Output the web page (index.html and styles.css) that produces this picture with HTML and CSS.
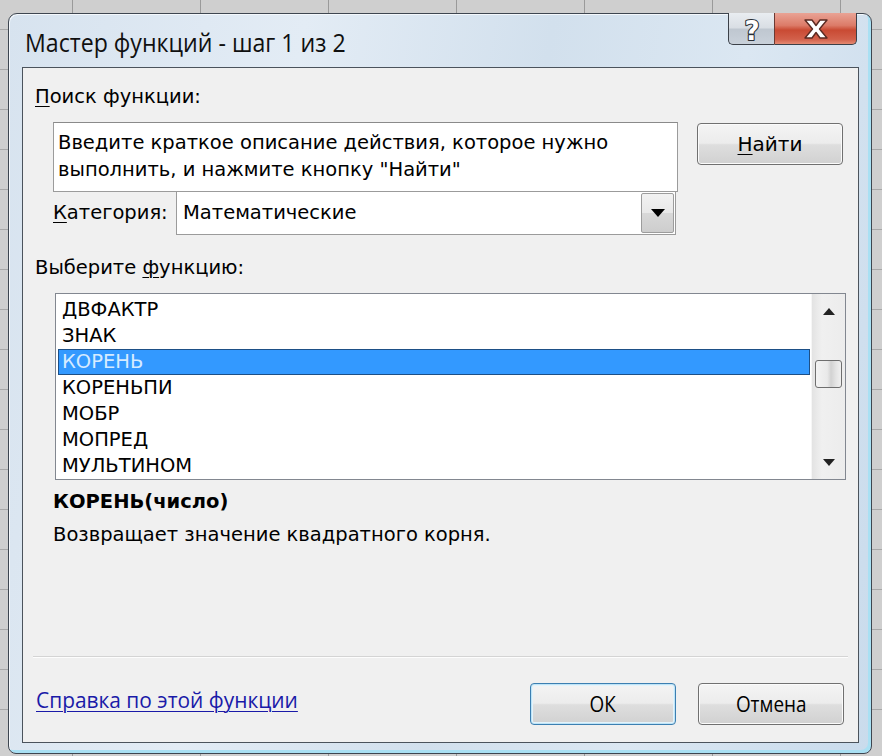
FILE: index.html
```html
<!DOCTYPE html>
<html lang="ru">
<head>
<meta charset="utf-8">
<title>Мастер функций</title>
<link rel="stylesheet" href="styles.css">
</head>
<body>
<div class="desk">
  <div class="window">
    <div class="titlebar">
      <div class="title"><span class="title-text">Мастер функций - шаг 1 из 2</span></div>
      <div class="caption-btns">
        <div class="cap-btn help">
          <svg class="q-svg" width="26" height="31" viewBox="0 0 26 31">
            <text x="13" y="27" text-anchor="middle" class="q">?</text>
          </svg>
        </div>
        <div class="cap-btn close">
          <svg width="34" height="22" viewBox="0 0 34 22">
            <path d="M6 2 H13 L17 7.5 L21 2 H28 L20.5 11 L28 20 H21 L17 14.5 L13 20 H6 L13.5 11 Z" fill="#fff" stroke="#5a2a22" stroke-width="1.4" stroke-linejoin="round"/>
          </svg>
        </div>
      </div>
    </div>
    <div class="panel">
      <div class="lbl lbl-search"><u>П</u>оиск функции:</div>
      <div class="search-row">
        <div class="search-box">Введите краткое описание действия, которое нужно выполнить, и нажмите кнопку &quot;Найти&quot;</div>
        <div class="btn btn-find"><u>Н</u>айти</div>
      </div>
      <div class="cat-row">
        <div class="lbl lbl-cat"><u>К</u>атегория:</div>
        <div class="select">
          <div class="select-val">Математические</div>
          <div class="select-btn"><span class="tri-down"></span></div>
        </div>
      </div>
      <div class="lbl lbl-func">Выберите <u>ф</u>ункцию:</div>
      <div class="listbox">
        <div class="items">
          <div class="item">ДВФАКТР</div>
          <div class="item">ЗНАК</div>
          <div class="item sel">КОРЕНЬ</div>
          <div class="item">КОРЕНЬПИ</div>
          <div class="item">МОБР</div>
          <div class="item">МОПРЕД</div>
          <div class="item">МУЛЬТИНОМ</div>
        </div>
        <div class="vscroll">
          <div class="arr arr-up"></div>
          <div class="track">
            <div class="thumb"></div>
          </div>
          <div class="arr arr-down"></div>
        </div>
      </div>
      <div class="syntax">КОРЕНЬ(число)</div>
      <div class="desc">Возвращает значение квадратного корня.</div>
      <div class="spacer"></div>
      <div class="sep"></div>
      <div class="bottom-row">
        <a class="help-link" href="#">Справка по этой функции</a>
        <div class="btns">
          <div class="btn btn-ok"><span class="cond">ОК</span></div>
          <div class="btn btn-cancel"><span class="cond">Отмена</span></div>
        </div>
      </div>
    </div>
  </div>
</div>
</body>
</html>
```

FILE: styles.css
```css
html, body {
  margin: 0;
  padding: 0;
}
body {
  width: 882px;
  height: 756px;
  overflow: hidden;
  background-color: #cfcfcf;
  background-image:
    repeating-linear-gradient(90deg, transparent 0, transparent 72px, #9a9a9a 72px, #9a9a9a 73px, transparent 73px, transparent 128px),
    repeating-linear-gradient(180deg, transparent 0, transparent 39px, #a8a8a8 39px, #a8a8a8 40px);
  background-position: 0 0, 0 -10px;
  font-family: "DejaVu Sans", Verdana, sans-serif;
  color: #000;
}
.desk {
  padding: 13px 0 0 8px;
}
.window {
  box-sizing: border-box;
  width: 864px;
  height: 741px;
  border: 1px solid #3e4650;
  border-radius: 9px 9px 8px 8px;
  background: linear-gradient(100deg, #d7e3ef 0%, #e3ecf5 30%, #d2e0ed 55%, #dbe7f2 75%, #c9dbec 100%);
  box-shadow: inset -3px -3px 0 #a9e0f3, inset 1px 1px 0 #f4f8fc;
  display: flex;
  flex-direction: column;
  padding: 0 12px 10px 13px;
}
.titlebar {
  height: 53px;
  display: flex;
  align-items: flex-start;
}
.title {
  padding-left: 3px;
  padding-top: 13px;
  flex: 1;
}
.title-text {
  display: inline-block;
  font-family: "Open Sans", "Noto Sans", sans-serif;
  font-size: 26px;
  line-height: 30px;
  color: #101010;
  transform: scaleX(0.89);
  transform-origin: left center;
  white-space: nowrap;
}
.caption-btns {
  display: flex;
  margin-right: 2px;
  margin-top: -1px;
}
.cap-btn {
  height: 31px;
  border: 1px solid #3b4048;
  border-top: none;
  display: flex;
  align-items: center;
  justify-content: center;
}
.help {
  width: 45px;
  border-radius: 0 0 0 5px;
  border-right: none;
  background: linear-gradient(180deg, #e9edf1 0%, #d9dee4 48%, #bfc7d0 52%, #c9d1da 100%);
}
.q-svg {
  display: block;
  overflow: visible;
}
.q {
  font-family: "DejaVu Sans", sans-serif;
  font-weight: bold;
  font-size: 26px;
  fill: #fff;
  stroke: #2a2f36;
  stroke-width: 2.2px;
  stroke-linejoin: round;
  paint-order: stroke fill;
}
.close {
  width: 81px;
  border-radius: 0 0 5px 0;
  border-left: 1px solid #6b3a33;
  background: linear-gradient(180deg, #e9a395 0%, #dc7b68 40%, #c94a33 55%, #d2604b 85%, #e48a72 100%);
}
.panel {
  flex: 1;
  border: 1px solid #4b535c;
  background: #f0f0f0;
  display: flex;
  flex-direction: column;
  font-size: 19.5px;
}
.lbl {
  line-height: 28px;
  white-space: nowrap;
}
.lbl u {
  text-decoration-thickness: 1px;
  text-underline-offset: 3px;
}
.lbl-search {
  margin: 15px 0 0 12px;
}
.search-row {
  display: flex;
  margin: 11px 0 0 30px;
  align-items: flex-start;
}
.search-box {
  width: 615px;
  height: 60px;
  border: 1px solid #9b9b9b;
  border-top-color: #8a8a8a;
  background: #fff;
  padding: 6px 4px 2px 4px;
  line-height: 27px;
}
.btn {
  box-sizing: border-box;
  width: 146px;
  height: 42px;
  border: 1px solid #707070;
  border-radius: 4px;
  background: linear-gradient(180deg, #f4f4f4 0%, #ececec 48%, #dedede 52%, #d1d1d1 100%);
  box-shadow: inset 0 0 0 1px #fbfbfb;
  display: flex;
  align-items: center;
  justify-content: center;
  font-size: 20px;
}
.btn u {
  text-decoration-thickness: 1px;
  text-underline-offset: 3px;
}
.btn-find {
  margin: 1px 0 0 19px;
}
.cat-row {
  display: flex;
  align-items: center;
  margin: -1px 0 0 30px;
}
.lbl-cat {
  width: 123px;
}
.select {
  width: 500px;
  height: 44px;
  box-sizing: border-box;
  border: 1px solid #9b9b9b;
  background: #fff;
  display: flex;
}
.select-val {
  flex: 1;
  padding-left: 6px;
  line-height: 42px;
}
.select-btn {
  width: 31px;
  margin: 1px;
  border: 1px solid #9c9c9c;
  border-radius: 2px;
  background: linear-gradient(180deg, #f2f2f2 0%, #e8e8e8 50%, #d8d8d8 51%, #cdcdcd 100%);
  display: flex;
  align-items: center;
  justify-content: center;
}
.tri-down {
  width: 0;
  height: 0;
  border-left: 7px solid transparent;
  border-right: 7px solid transparent;
  border-top: 8px solid #000;
}
.lbl-func {
  margin: 19px 0 0 12px;
}
.listbox {
  margin: 11px 0 0 32px;
  width: 791px;
  height: 187px;
  box-sizing: border-box;
  border: 1px solid #828790;
  background: #fff;
  display: flex;
}
.items {
  flex: 1;
  padding: 3px 1px 0 2px;
}
.item {
  height: 26px;
  line-height: 26px;
  padding-left: 4px;
  box-sizing: border-box;
  white-space: nowrap;
}
.item.sel {
  background: #3399ff;
  color: #d6ebff;
  border: 1px solid #1d4f86;
  line-height: 24px;
  padding-left: 3px;
}
.vscroll {
  width: 33px;
  background: linear-gradient(90deg, #e3e3e3 0%, #f0f0f0 30%, #ececec 100%);
  display: flex;
  flex-direction: column;
  align-items: center;
  border-left: 1px solid #f6f6f6;
}
.arr {
  height: 34px;
  width: 100%;
  display: flex;
  align-items: center;
  justify-content: center;
}
.arr-up::before {
  content: "";
  border-left: 6px solid transparent;
  border-right: 6px solid transparent;
  border-bottom: 7px solid #222;
}
.arr-down::before {
  content: "";
  border-left: 6px solid transparent;
  border-right: 6px solid transparent;
  border-top: 7px solid #222;
}
.track {
  flex: 1;
  width: 100%;
  display: flex;
  flex-direction: column;
  align-items: center;
}
.thumb {
  margin-top: 32px;
  width: 27px;
  height: 28px;
  box-sizing: border-box;
  border: 1px solid #6e6e6e;
  border-radius: 3px;
  background: linear-gradient(90deg, #f3f3f3 0%, #e9e9e9 45%, #d2d2d2 60%, #e4e4e4 80%, #f0f0f0 100%);
}
.syntax {
  margin: 8px 0 0 30px;
  line-height: 28px;
  font-weight: bold;
}
.desc {
  margin: 5px 0 0 30px;
  line-height: 28px;
}
.spacer {
  flex: 1;
}
.sep {
  height: 1px;
  background: #d4d4d4;
  border-bottom: 1px solid #fdfdfd;
  margin: 0 10px 0 10px;
}
.bottom-row {
  height: 84px;
  display: flex;
  align-items: flex-start;
  justify-content: space-between;
  padding: 0 14px 0 13px;
}
.help-link {
  margin-top: 28px;
  font-family: "Open Sans", "Noto Sans", sans-serif;
  font-size: 22px;
  line-height: 26px;
  color: #1a1aa8;
  text-decoration: underline;
  text-decoration-thickness: 1px;
  text-underline-offset: 3px;
  display: inline-block;
  transform: scaleX(0.95);
  transform-origin: left center;
  white-space: nowrap;
}
.btns {
  display: flex;
  gap: 22px;
  margin-top: 25px;
}
.btn-ok {
  border-color: #3c7fb1;
  box-shadow: inset 0 0 0 1px #bfe4f7, inset 0 0 0 2px #e3f3fb;
}
.cond {
  display: inline-block;
  font-family: "Open Sans", "Noto Sans", sans-serif;
  font-size: 21px;
  transform: scaleX(0.9);
}
```
